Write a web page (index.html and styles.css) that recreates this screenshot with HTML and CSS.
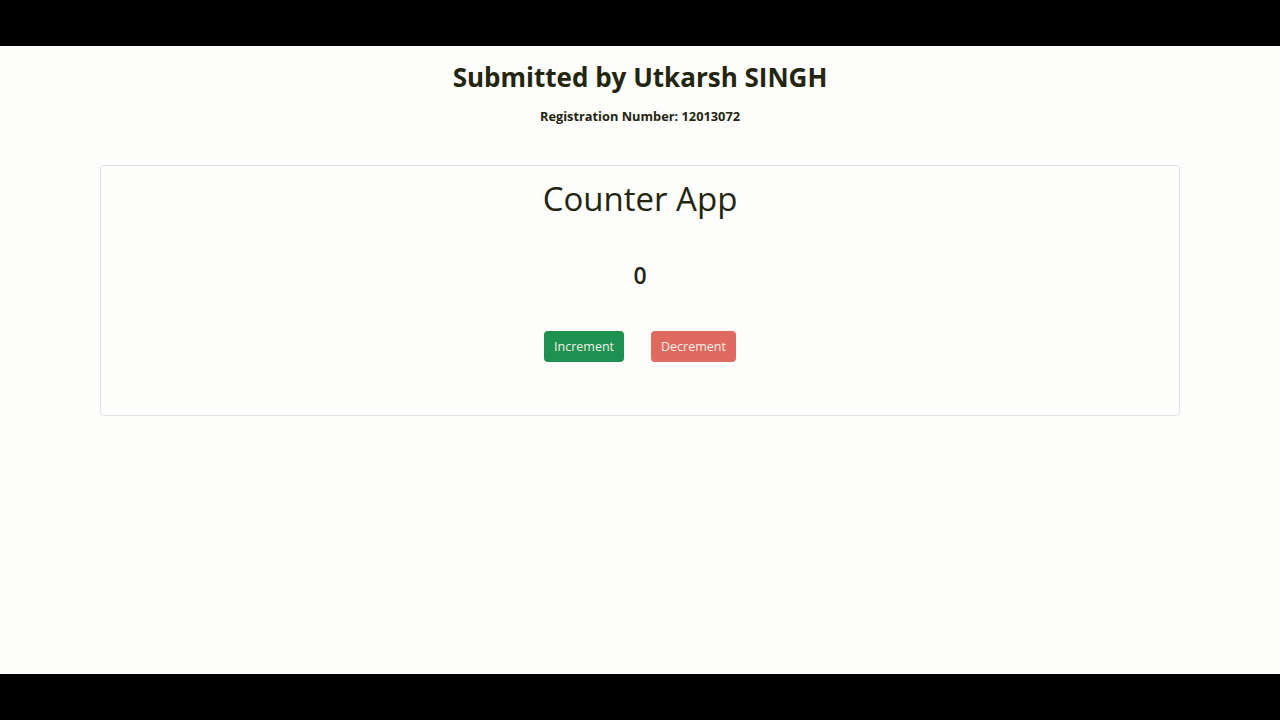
FILE: index.html
```html
<!DOCTYPE html>
<html lang="en">
<head>
<meta charset="utf-8">
<title>Counter App</title>
<link rel="stylesheet" href="styles.css">
</head>
<body>
<div class="bar"></div>
<main class="page">
  <header class="intro">
    <h2 class="submitted">Submitted by Utkarsh SINGH</h2>
    <p class="reg">Registration Number: 12013072</p>
  </header>
  <section class="card">
    <h1 class="title">Counter App</h1>
    <div class="count">0</div>
    <div class="actions">
      <button class="btn btn-inc">Increment</button>
      <button class="btn btn-dec">Decrement</button>
    </div>
  </section>
</main>
<div class="bar"></div>
</body>
</html>
```
FILE: styles.css
```css
* { box-sizing: border-box; }
html, body { margin: 0; padding: 0; }
body {
  width: 1280px;
  height: 720px;
  display: flex;
  flex-direction: column;
  background: #000;
  font-family: "Open Sans", "Noto Sans", sans-serif;
  color: #23250f;
}
.bar { height: 46px; background: #000; flex: none; }
.page {
  flex: 1;
  background: #fdfdfb;
  padding: 0 100px;
  display: flex;
  flex-direction: column;
}
.intro { text-align: center; padding-top: 14px; }
.submitted {
  margin: 0;
  font-size: 26px;
  font-weight: 700;
  line-height: 34px;
}
.reg {
  margin: 13px 0 0;
  font-size: 12.8px;
  font-weight: 700;
  line-height: 18px;
}
.card {
  margin-top: 40px;
  height: 251px;
  border: 1px solid #e2e2e8;
  border-radius: 4px;
  display: flex;
  flex-direction: column;
  align-items: center;
}
.title {
  margin: 13px 0 0;
  font-size: 33px;
  font-weight: 400;
  line-height: 40px;
}
.count {
  margin-top: 40px;
  font-size: 23px;
  font-weight: 600;
  line-height: 32px;
}
.actions {
  margin-top: 40px;
  display: flex;
  gap: 27px;
}
.btn {
  font-family: inherit;
  font-size: 12.5px;
  height: 31px;
  padding: 0 10px;
  border: none;
  border-radius: 4px;
  color: #f4f0e8;
}
.btn-inc { background: #1e9150; }
.btn-dec { background: #df6a60; }
```
